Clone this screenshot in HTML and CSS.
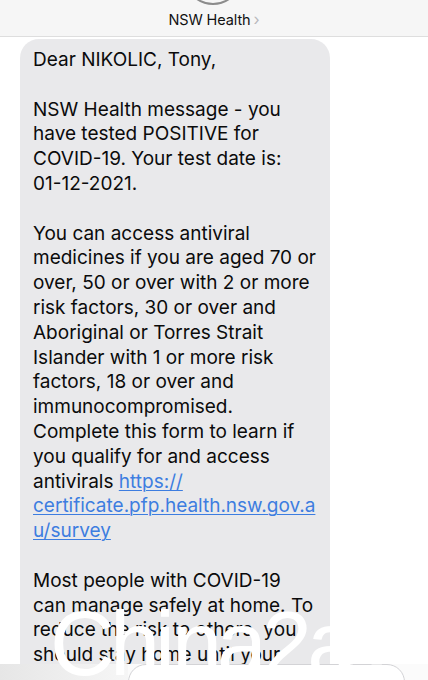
FILE: index.html
```html
<!DOCTYPE html>
<html>
<head>
<meta charset="utf-8">
<link rel="stylesheet" href="styles.css">
</head>
<body>
<div class="screen">
  <header class="header">
    <div class="avatar"></div>
    <div class="name">NSW Health<span class="chev">&#8250;</span></div>
  </header>
  <main class="thread">
    <div class="bubble">
      <p>Dear NIKOLIC, Tony,</p>
      <p>NSW Health message - you<br>have tested POSITIVE for<br>COVID-19. Your test date is:<br>01-12-2021.</p>
      <p>You can access antiviral<br>medicines if you are aged 70 or<br>over, 50 or over with 2 or more<br>risk factors, 30 or over and<br>Aboriginal or Torres Strait<br>Islander with 1 or more risk<br>factors, 18 or over and<br>immunocompromised.<br>Complete this form to learn if<br>you qualify for and access<br>antivirals <a class="link" href="#">https://<br>certificate.pfp.health.nsw.gov.a<br>u/survey</a></p>
      <p>Most people with COVID-19<br>can manage safely at home. To<br>reduce the risk to others, you<br>should stay home until your<br>test results are known.</p>
    </div>
  </main>
  <div class="composer">
    <div class="tools"></div>
    <div class="field"></div>
  </div>
  <div class="watermark"><span class="wm1">Chi</span><span class="wm2">na2a</span><span class="wm3">u</span></div>
</div>
</body>
</html>
```
FILE: styles.css
```css
* { box-sizing: border-box; }
html, body { margin: 0; padding: 0; background: #fff; }
body { width: 428px; height: 680px; overflow: hidden; font-family: Inter, "Noto Sans", "Liberation Sans", sans-serif; }
.screen { position: relative; width: 428px; height: 680px; overflow: hidden; }

.header {
  height: 37px;
  background: #f6f6f6;
  border-bottom: 1px solid #dedede;
  display: flex;
  flex-direction: column;
  align-items: center;
}
.avatar {
  width: 58px; height: 58px;
  border-radius: 50%;
  border: 2.5px solid #8c8c8c;
  margin-top: -53px;
  margin-left: -2px;
  flex: none;
}
.name {
  margin-top: 5px;
  font-size: 14.5px;
  color: #111;
  line-height: 18px;
  letter-spacing: -0.1px;
}
.chev { color: #b9b9bd; margin-left: 3px; font-size: 16px; }

.thread { padding: 2px 0 0 20px; }
.bubble {
  width: 310px;
  background: #e9e9eb;
  border-radius: 19px;
  padding: 9px 10px 0 13px;
  font-size: 19px;
  line-height: 24.8px;
  color: #0b0b0b;
}
.bubble p { margin: 0 0 24.8px 0; white-space: nowrap; }
.link { color: #3d7de0; text-decoration: underline; text-underline-offset: 2px; text-decoration-thickness: 1px; }

.composer {
  position: absolute;
  left: 0; right: 0; top: 664px; height: 40px;
  background: #fbfbfb;
  display: flex;
}
.tools { width: 128px; background: linear-gradient(90deg, #e6e6e6, #f6f6f6); }
.field {
  width: 277px; height: 36px;
  border: 1px solid #d3d3d6;
  border-radius: 18px;
  background: #fff;
}

.watermark {
  position: absolute;
  left: 0; top: 0; width: 428px; height: 680px;
  font-family: "Liberation Sans", Arial, sans-serif;
  font-size: 90px;
  color: #fff;
  pointer-events: none;
}
.watermark span { position: absolute; top: 594px; line-height: 100px; letter-spacing: -5px; }
.wm1 { left: 50px; }
.wm2 { left: 172px; }
.wm3 { left: 338px; color: rgba(255,255,255,0.45); }
```
